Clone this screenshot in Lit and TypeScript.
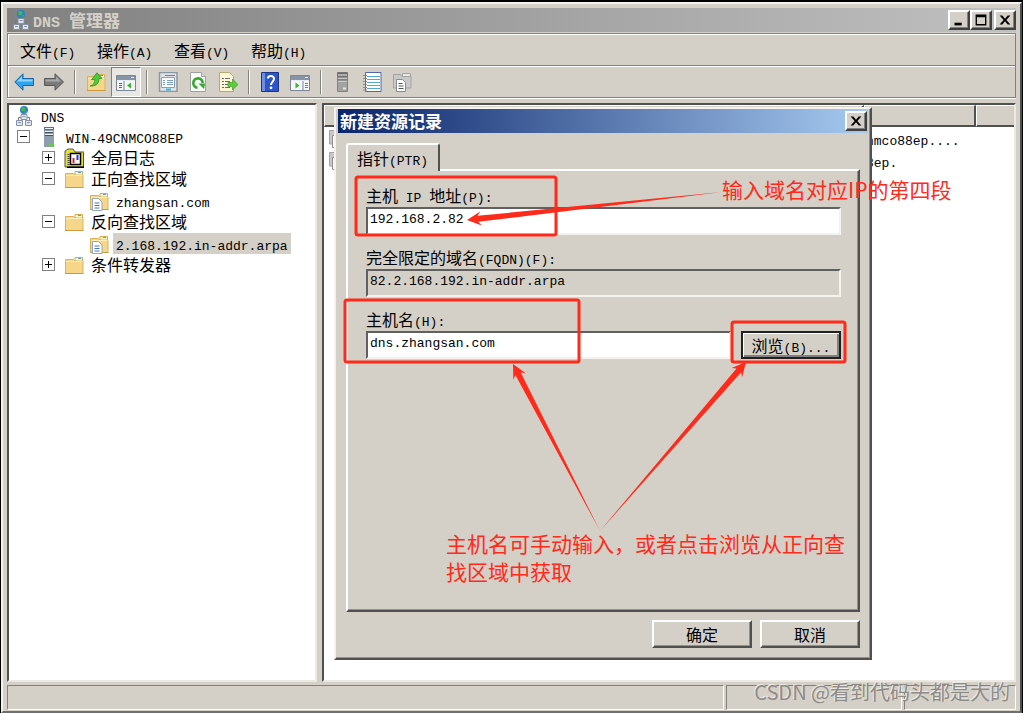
import { LitElement, html, svg, css, nothing, TemplateResult } from "lit";
import { customElement, property } from "lit/decorators.js";

/* Wraps every run of Latin characters so that it takes the narrower console face. */
const mixed = (text: string) =>
  text
    .split(/([\x20-\x7e]+)/)
    .filter((part) => part)
    .map((part) => (/^[\x20-\x7e]/.test(part) ? html`<span class="latin">${part}</span>` : part));

const latinStyles = css`
  * {
    box-sizing: border-box;
  }
  .latin {
    font-family: "Liberation Mono", monospace;
    font-size: 13px;
    line-height: 1;
    white-space: pre;
  }
  button,
  input {
    font: inherit;
    color: inherit;
    margin: 0;
    border-radius: 0;
  }
`;

const folderShape = svg`
  <path d="M11 2.500h7.500v4H11z" fill="#fff6d2" stroke="#d8ab4e"/>
  <path d="M14 3.500h3" stroke="#4aa3dc"/>
  <path d="M1.500 4.500h8l1.500 1.500h8v12.500h-17.500z" fill="#f6d68a" stroke="#dcb25a"/>
  <path d="M2 6.500h16.500" stroke="#fdeebc"/>
  <path d="M1 18.500h18.500" stroke="#c99a42"/>`;

const icons: Record<string, TemplateResult<2>> = {
  back: svg`<path d="M.8 10 9 1.800v4.700h10.500v7H9v4.700z" fill="#2fa4ee" stroke="#1765a8"/><path d="M3 9.500 8 4.500v3h10.500v2z" fill="#8fd4fb"/>`,
  forward: svg`<path d="M19.500 10 11 1.800v4.700H.6v7H11v4.700z" fill="#7b7b7b" stroke="#565656"/><path d="M17 9.500 12 4.500v3H1.500v2z" fill="#a9a9a9"/>`,
  up: svg`${folderShape}<path d="M4 14c4-1 5-4 4.500-6.500H5.500L11 .8l5 5.700h-3c0 5-3 8-9 7.500z" fill="#4fc83c" stroke="#2c9420" stroke-width=".8"/>`,
  panes: svg`<path d="M.5 3.500h19v15H.5z" fill="#f4f6f8" stroke="#7c8796"/><path d="M1 4h18v4H1z" fill="#8794a8"/><path d="M15 5.500h3M1 8.500h18" stroke="#e8eef4"/><path d="M8 9v9" stroke="#7c8796"/><path d="M3 11.500h3M3 13.500h3M3 15.500h3" stroke="#3c70a8"/><path d="M15 10.500v6l-4-3z" fill="#3bb52c"/>`,
  action: svg`<path d="M.5 3.500h19v15H.5z" fill="#f4f6f8" stroke="#7c8796"/><path d="M1 4h18v4H1z" fill="#8794a8"/><path d="M15 5.500h3M1 8.500h18" stroke="#e8eef4"/><path d="M13 9v9" stroke="#7c8796"/><path d="M15 11.500h3M15 13.500h3M15 15.500h3" stroke="#3c8fd0"/><path d="M5.500 10.500v6l4-3z" fill="#3bb52c"/>`,
  properties: svg`<path d="M1.500.5h17.500v19H1.500z" fill="#dfe3e8" stroke="#8d96a3" stroke-width="1.500"/><path d="M3.500 5.500h13v10h-13z" fill="#fafbfd" stroke="#8ea0b8"/><path d="M7 3.500h10" stroke="#6b7f99"/><path d="M5 8.500h2M9 8.500h6M5 10.500h2M9 10.500h6M5 12.500h2M9 12.500h6" stroke="#7d9cc4"/><path d="M8 17.500h5" stroke="#36b8e8" stroke-width="2"/>`,
  refresh: svg`<path d="M2.500.5h11l4 4v15h-15z" fill="#fbfbfb" stroke="#a0a0a0"/><path d="M13.500.5v4h4" fill="#ddd" stroke="#a0a0a0"/><path d="M9.500 15.700A4.700 4.700 0 1 1 14.700 11" fill="none" stroke="#35a72c" stroke-width="2.600"/><path d="M10.500 11.500H17l-1 5.500z" fill="#35a72c"/>`,
  exportList: svg`<path d="M1.500.5h10l4 4v15h-14z" fill="#fdf7d6" stroke="#b9a96d"/><path d="M4 6.500h2M7 6.500h5M4 9.500h2M7 9.500h5M4 12.500h2M7 12.500h3M4 15.500h2M7 15.500h5" stroke="#6b6b78" stroke-width="1.200"/><path d="M10 10.500h4.500V7l5.500 5.500-5.500 5.500v-3.500H10z" fill="#5ccc3c" stroke="#3d9f28" stroke-width=".7"/>`,
  help: svg`<path d="M1.500.5h17v19h-17z" fill="#2b55c8" stroke="#1c3484"/><path d="M2 1h3v18H2z" fill="#6d8ee6"/><path d="M7.800 6.500C8 3 14.200 3 14 7c0 2.500-3 2.800-3 6" fill="none" stroke="#fff" stroke-width="2"/><circle cx="11" cy="15.800" r="1.400" fill="#fff"/>`,
  server: svg`<path d="M5.500.5h10v19h-10z" fill="#a2a2a2" stroke="#828282"/><path d="M5.500.5h10v4h-10z" fill="#6a6a6a"/><path d="M6 3h9M6 6h9M6 9h9" stroke="#f0f0f0"/><path d="M6 5h9M6 8h9" stroke="#5c5c5c"/><path d="M11 16.500h3" stroke="#e4e4e4" stroke-width="2"/>`,
  notebook: svg`<path d="M3.500.5h15.500v19H3.500z" fill="#fff" stroke="#5367a8"/><path d="M5 4.500h13M5 7.500h13M5 10.500h13M5 13.500h13M5 16.500h13" stroke="#55a7cf"/><path d="M1 3.500h4M1 6.500h4M1 9.500h4M1 12.500h4M1 15.500h4M1 18h4" stroke="#8a8a8a"/>`,
  zoneGray: svg`<path d="M10.500 1.500h8v4h-8z" fill="#e8e8e8" stroke="#a4a4a4"/><path d="M1.500 2.500h7l1.500 2h9v11.500h-17.500z" fill="#c9c9c9" stroke="#a2a2a2"/><path d="M4.500 7.500h6l3 3v9h-9z" fill="#fff" stroke="#8a8a8a"/><path d="M6.500 11.500h4M6.500 14h5M6.500 16.500h5" stroke="#555"/>`,
  network: svg`<path d="M10 7v4M4.500 14v-2.500h11V14" stroke="#777" fill="none"/><circle cx="10" cy="4" r="4" fill="#2a83c9"/><path d="M8 1c3 0 4 1 3 3s-3 1-4 0zM10 6l3-1-1 2z" fill="#43bd4a"/><path d="M7 8.500h6v5H7zM2.500 14.500h6v5h-6zM11.500 14.500h6v5h-6z" fill="#dfe3ea" stroke="#8991a0"/><path d="M8.500 10.500h3M4 16.500h3M13 16.500h3" stroke="#8597b8"/>`,
  host: svg`<path d="M5 0h10v20H5z" fill="#8d9eae"/><path d="M5 0h10v3H5z" fill="#5e7080"/><path d="M6 1.500h8M6 4.500h8M6 7.500h8" stroke="#edf2f5"/><path d="M6 5.500h8M6 8.500h8" stroke="#43525f"/><path d="M10 18h4" stroke="#5fd52a" stroke-width="3"/>`,
  log: svg`<path d="M1 3 4 1h5l2 3h9v15H1z" fill="#e6df3a" stroke="#555"/><path d="M3 19.500h17.500V5" fill="none" stroke="#000" stroke-width="2"/><path d="M6.500 5.500h10v11h-10z" fill="#fff" stroke="#000" stroke-width="1.500"/><path d="M4.500 6v11" stroke="#444" stroke-dasharray="1 1" stroke-width="2"/><path d="M9.500 10v5" stroke="#e0202c" stroke-width="2"/><path d="M13.500 7v5" stroke="#2234d8" stroke-width="2"/>`,
  folder: folderShape,
  zone: svg`${folderShape}<path d="M3.500 7.500h6l3.500 3.500v8.500H3.500z" fill="#fff" stroke="#8fa5c2"/><path d="M5.500 12h5M5.500 14.500h5M5.500 17h5" stroke="#4277b8"/>`,
};

const icon = (name: string) =>
  html`<svg class="icon" viewBox="0 0 20 20" width="20" height="20" aria-hidden="true">${icons[name]}</svg>`;

const captionGlyphs: Record<string, TemplateResult<2>> = {
  minimize: svg`<path d="M5 11h8v3H5z"/>`,
  maximize: svg`<path d="M4 2h12v12H4zM5.500 5v7.500h9V5z" fill-rule="evenodd"/>`,
  close: svg`<path d="M4 3h3l3 3.500L13 3h3l-4.500 5 4.500 5h-3l-3-3.500L7 13H4l4.500-5z"/>`,
};

interface TreeNode {
  label: string;
  icon: string;
  open?: boolean;
  selected?: boolean;
  children?: TreeNode[];
}

const tree: TreeNode = {
  label: "DNS",
  icon: "network",
  children: [
    {
      label: "WIN-49CNMCO88EP",
      icon: "host",
      open: true,
      children: [
        { label: "全局日志", icon: "log", open: false },
        { label: "正向查找区域", icon: "folder", open: true, children: [{ label: "zhangsan.com", icon: "zone" }] },
        {
          label: "反向查找区域",
          icon: "folder",
          open: true,
          children: [{ label: "2.168.192.in-addr.arpa", icon: "zone", selected: true }],
        },
        { label: "条件转发器", icon: "folder", open: false },
      ],
    },
  ],
};

@customElement("caption-button")
class CaptionButton extends LitElement {
  @property() kind = "close";
  @property() label = "";

  static styles = css`
    :host {
      display: block;
    }
    button {
      display: block;
      box-sizing: border-box;
      width: 22px;
      height: 20px;
      padding: 0;
      background: #d4d0c8;
      border: 2px solid;
      border-color: #fff #404040 #404040 #fff;
      box-shadow: inset -1px -1px #808080;
    }
    svg {
      display: block;
    }
  `;

  render() {
    return html`<button type="button" aria-label=${this.label}>
      <svg viewBox="0 0 20 16" width="18" height="16" aria-hidden="true">${captionGlyphs[this.kind]}</svg>
    </button>`;
  }
}

@customElement("console-tree")
class ConsoleTree extends LitElement {
  static styles = [
    latinStyles,
    css`
      :host {
        display: block;
        padding: 0 2px;
      }
      ul {
        list-style: none;
        margin: 0;
        padding: 0;
      }
      ul ul ul {
        padding-left: 25px;
      }
      ul ul ul ul {
        margin-top: 1px;
      }
      .row {
        display: flex;
        align-items: center;
        height: 21px;
      }
      .cell {
        display: flex;
        justify-content: center;
        flex: none;
        width: 25px;
      }
      .toggle {
        width: 13px;
        height: 13px;
        padding: 0;
        border: 1px solid #808080;
        background: linear-gradient(#000, #000) center / 7px 1px no-repeat #fff;
      }
      .toggle.closed {
        background:
          linear-gradient(#000, #000) center / 7px 1px no-repeat,
          linear-gradient(#000, #000) center / 1px 7px no-repeat #fff;
      }
      .label {
        margin-left: 2px;
        padding: 0 3px;
        line-height: 21px;
        white-space: nowrap;
      }
      .selected {
        background: #d4d0c8;
      }
    `,
  ];

  private node(node: TreeNode, depth = 0): TemplateResult {
    return html`<li>
      <div class="row">
        ${depth === 0
          ? nothing
          : html`<span class="cell"
              >${node.open === undefined
                ? nothing
                : html`<button
                    type="button"
                    class="toggle ${node.open ? "" : "closed"}"
                    aria-label=${node.label}
                    aria-expanded=${node.open}
                  ></button>`}</span
            >`}
        <span class="cell">${icon(node.icon)}</span>
        <span class="label ${node.selected ? "selected" : ""}">${mixed(node.label)}</span>
      </div>
      ${node.children ? html`<ul>${node.children.map((child) => this.node(child, depth + 1))}</ul>` : nothing}
    </li>`;
  }

  render() {
    return html`<ul>${this.node(tree)}</ul>`;
  }
}

/* A tapered arrow: a point at its tail, widening up to a swept-back head. */
const arrow = (x1: number, y1: number, x2: number, y2: number) => {
  const length = Math.hypot(x2 - x1, y2 - y1);
  const ux = (x2 - x1) / length;
  const uy = (y2 - y1) / length;
  const at = (back: number, side: number) =>
    `${(x2 - ux * back - uy * side).toFixed(1)},${(y2 - uy * back + ux * side).toFixed(1)}`;
  const points = [`${x1},${y1}`, at(11, 3), at(14, 7), at(0, 0), at(14, -7), at(11, -3)];
  return svg`<polygon points=${points.join(" ")} fill="#ff2a1a"/>`;
};

@customElement("record-dialog")
class RecordDialog extends LitElement {
  static styles = [
    latinStyles,
    css`
      :host {
        display: block;
        position: relative;
        background: #d4d0c8;
        border: 2px solid;
        border-color: #f4f2ee #505050 #505050 #f4f2ee;
        box-shadow: inset -1px -1px #909090;
      }
      header {
        display: flex;
        align-items: center;
        justify-content: space-between;
        height: 24px;
        margin: 0 2px;
        padding: 0 1px 0 2px;
        background: linear-gradient(90deg, #0a246a, #a6caf0);
      }
      h2 {
        margin: 0;
        font-size: 17px;
        font-weight: 700;
        line-height: 24px;
        color: #fff;
      }
      .body {
        padding: 10px 10px;
      }
      .tab {
        display: block;
        position: relative;
        height: 28px;
        margin-bottom: -2px;
        padding: 0 10px 0 9px;
        background: #d4d0c8;
        border: 2px solid;
        border-color: #fff #505050 transparent #fff;
        border-bottom: 0;
        border-radius: 3px 3px 0 0;
        line-height: 24px;
      }
      .panel {
        min-height: 443px;
        padding: 14px 17px 14px 18px;
        border: 2px solid;
        border-color: #fff #505050 #505050 #fff;
        box-shadow: inset -1px -1px #909090;
      }
      .field {
        display: grid;
        grid-template-columns: 1fr auto;
        gap: 2px 10px;
        margin-bottom: 12px;
      }
      label {
        grid-column: 1 / -1;
        height: 20px;
        line-height: 20px;
      }
      input {
        width: 100%;
        min-width: 0;
        height: 28px;
        padding: 0 2px 4px;
        font-family: "Liberation Mono", monospace;
        font-size: 13px;
        background: #fff;
        border: 2px solid;
        border-color: #606060 #f4f2ee #f4f2ee #606060;
        outline: none;
      }
      .wide {
        grid-column: 1 / -1;
      }
      input[readonly] {
        background: #d4d0c8;
      }
      .push {
        width: 100px;
        height: 28px;
        padding: 0;
        background: #d4d0c8;
        border: 2px solid;
        border-color: #fff #505050 #505050 #fff;
        box-shadow: inset -1px -1px #909090;
        line-height: 20px;
      }
      .default {
        border-color: #202020;
        box-shadow:
          inset 1px 1px #fff,
          inset -2px -2px #808080;
      }
      .actions {
        display: flex;
        justify-content: flex-end;
        gap: 8px;
        margin-top: 8px;
      }
      .marks {
        position: absolute;
        left: 0;
        top: 0;
        pointer-events: none;
      }
      .note {
        position: absolute;
        margin: 0;
        font-size: 21px;
        line-height: 28px;
        color: #ff2a1a;
      }
      .note-address {
        left: 386px;
        top: 66px;
        white-space: nowrap;
      }
      .note-host {
        left: 110px;
        top: 420px;
        width: 400px;
      }
    `,
  ];

  render() {
    return html`
      <header>
        <h2>新建资源记录</h2>
        <caption-button kind="close" label="关闭"></caption-button>
      </header>
      <div class="body">
        <button type="button" class="tab" role="tab" aria-selected="true">${mixed("指针(PTR)")}</button>
        <div class="panel">
          <div class="field">
            <label for="address">${mixed("主机 IP 地址(P):")}</label>
            <input id="address" class="wide" .value=${"192.168.2.82"} />
          </div>
          <div class="field">
            <label for="fqdn">${mixed("完全限定的域名(FQDN)(F):")}</label>
            <input id="fqdn" class="wide" readonly .value=${"82.2.168.192.in-addr.arpa"} />
          </div>
          <div class="field">
            <label for="host">${mixed("主机名(H):")}</label>
            <input id="host" .value=${"dns.zhangsan.com"} />
            <button type="button" class="push default">${mixed("浏览(B)...")}</button>
          </div>
        </div>
        <div class="actions">
          <button type="button" class="push">确定</button>
          <button type="button" class="push">取消</button>
        </div>
      </div>
      <svg class="marks" viewBox="336 109 533 549" width="533" height="549" aria-hidden="true">
        <g fill="none" stroke="#ff2a1a" stroke-width="3">
          <rect x="356" y="177" width="200" height="58" rx="2" />
          <rect x="345" y="300" width="234" height="62" rx="2" />
          <rect x="732" y="322" width="113" height="40" rx="2" />
        </g>
        ${arrow(722, 192, 467, 220)} ${arrow(600, 531, 513, 364)} ${arrow(600, 531, 746, 362)}
      </svg>
      <p class="note note-address">输入域名对应IP的第四段</p>
      <p class="note note-host">主机名可手动输入，或者点击浏览从正向查找区域中获取</p>
    `;
  }
}

const menus = ["文件(F)", "操作(A)", "查看(V)", "帮助(H)"];

const tools: [string, string][][] = [
  [["back", "后退"], ["forward", "前进"]],
  [["up", "上移"], ["panes", "控制台树"]],
  [["properties", "属性"], ["refresh", "刷新"], ["exportList", "导出列表"]],
  [["help", "帮助"], ["action", "操作窗格"]],
  [["server", "服务器"], ["notebook", "记录"], ["zoneGray", "区域"]],
];

@customElement("app-root")
class AppRoot extends LitElement {
  static styles = [
    latinStyles,
    css`
      :host {
        display: flex;
        box-sizing: border-box;
        min-height: 100vh;
        padding: 2px 1px 0;
        background: #000;
        color: #000;
        font-family: "Noto Sans CJK SC", sans-serif;
        font-size: 16px;
      }
      .window {
        flex: 1;
        min-width: 0;
        display: flex;
        flex-direction: column;
        position: relative;
        padding: 4px 4px 1px;
        background: #d4d0c8;
        border: 2px solid;
        border-color: #f4f2ee #505050 #707070 #f4f2ee;
      }
      .title {
        display: flex;
        align-items: center;
        height: 24px;
        padding: 0 0 0 4px;
        background: linear-gradient(90deg, #808080, #c0c0c0);
      }
      h1 {
        flex: 1;
        margin: 0 0 0 2px;
        font-size: 17px;
        font-weight: 700;
        line-height: 24px;
        color: #d4d0c8;
      }
      h1 .latin {
        font-size: 15px;
      }
      .title caption-button:last-child {
        margin-left: 2px;
      }
      .bars {
        margin-top: 1px;
        border: 1px solid #808080;
        box-shadow:
          inset 1px 1px #fff,
          0 1px #fff;
      }
      .menu {
        display: flex;
        height: 32px;
        padding-left: 1px;
        border-bottom: 1px solid #808080;
      }
      .menu button {
        width: 77px;
        padding: 0 0 0 11px;
        border: 0;
        background: none;
        text-align: left;
        line-height: 30px;
      }
      .tools {
        display: flex;
        align-items: center;
        height: 31px;
        padding-left: 1px;
        border-top: 1px solid #fff;
      }
      .group {
        display: flex;
      }
      .group + .group::before {
        content: "";
        height: 24px;
        margin: 3px 5px;
        border-left: 1px solid #808080;
        border-right: 1px solid #fff;
      }
      .tool {
        display: grid;
        place-items: center;
        width: 30px;
        height: 30px;
        padding: 0;
        border: 1px solid transparent;
        background: none;
      }
      .pressed {
        border-color: #808080 #fff #fff #808080;
        background: #e9e7e3;
      }
      main {
        flex: 1;
        display: flex;
        gap: 5px;
        margin-top: 5px;
      }
      .pane {
        position: relative;
        background: #fff;
        border: 2px solid;
        border-color: #505050 #ece9e2 #ece9e2 #505050;
      }
      .side {
        flex: none;
        width: 310px;
      }
      .list {
        flex: 1;
        min-width: 0;
      }
      table {
        width: 100%;
        table-layout: fixed;
        border-collapse: separate;
        border-spacing: 0;
      }
      .name {
        width: 540px;
      }
      .data {
        width: 112px;
      }
      th {
        height: 22px;
        padding: 0;
        background: #d4d0c8;
        border: solid;
        border-width: 1px 2px 2px 1px;
        border-color: #fff #505050 #505050 #fff;
      }
      th:last-child {
        border-right: 0;
      }
      td {
        height: 22px;
        padding: 0 2px;
        line-height: 20px;
        white-space: nowrap;
      }
      td .icon {
        display: block;
        margin-left: 2px;
      }
      record-dialog {
        position: absolute;
        left: 10px;
        top: 2px;
        width: 538px;
      }
      footer {
        display: grid;
        grid-template-columns: 1fr 176px 112px;
        gap: 2px;
        height: 25px;
        margin-top: 3px;
      }
      .status {
        border: 1px solid;
        border-color: #808080 #fff #fff #808080;
      }
      .watermark {
        position: absolute;
        right: 10px;
        bottom: 5px;
        font-size: 20px;
        line-height: 28px;
        color: #8e8b86;
        text-shadow: -1px -1px #eceae5;
      }
    `,
  ];

  render() {
    return html`
      <div class="window">
        <div class="title">
          ${icon("network")}
          <h1>${mixed("DNS ")}管理器</h1>
          <caption-button kind="minimize" label="最小化"></caption-button>
          <caption-button kind="maximize" label="最大化"></caption-button>
          <caption-button kind="close" label="关闭"></caption-button>
        </div>
        <div class="bars">
          <nav class="menu">${menus.map((name) => html`<button type="button">${mixed(name)}</button>`)}</nav>
          <div class="tools" role="toolbar">
            ${tools.map(
              (group) => html`<div class="group">
                ${group.map(
                  ([name, label]) =>
                    html`<button type="button" class="tool ${name === "panes" ? "pressed" : ""}" aria-label=${label}>
                      ${icon(name)}
                    </button>`
                )}
              </div>`
            )}
          </div>
        </div>
        <main>
          <section class="pane side"><console-tree></console-tree></section>
          <section class="pane list">
            <table>
              <thead>
                <tr>
                  <th class="name"></th>
                  <th class="data"></th>
                  <th></th>
                </tr>
              </thead>
              <tbody>
                ${["nmco88ep....", "8ep."].map(
                  (data) => html`<tr>
                    <td>${icon("zoneGray")}</td>
                    <td>${mixed(data)}</td>
                    <td></td>
                  </tr>`
                )}
              </tbody>
            </table>
            <record-dialog role="dialog" aria-label="新建资源记录"></record-dialog>
          </section>
        </main>
        <footer>
          <div class="status"></div>
          <div class="status"></div>
          <div class="status"></div>
        </footer>
        <div class="watermark">CSDN @看到代码头都是大的</div>
      </div>
    `;
  }
}
